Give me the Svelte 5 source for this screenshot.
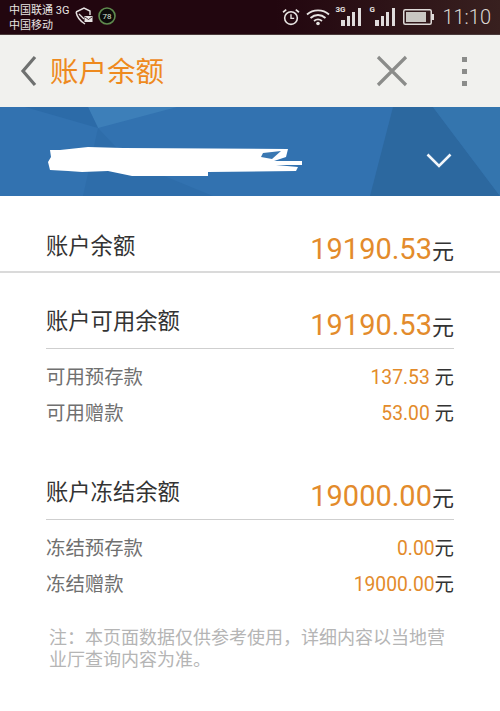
<script>
  const sections = [
    {
      title: '账户可用余额',
      total: '19190.53',
      rows: [
        { label: '可用预存款', value: '137.53', spaced: true },
        { label: '可用赠款', value: '53.00', spaced: true }
      ]
    },
    {
      title: '账户冻结余额',
      total: '19000.00',
      rows: [
        { label: '冻结预存款', value: '0.00', spaced: false },
        { label: '冻结赠款', value: '19000.00', spaced: false }
      ]
    }
  ];

  // full-width colon and comma, as in the original copy
  const note = '注\uFF1A本页面数据仅供参考使用\uFF0C详细内容以当地营业厅查询内容为准\u3002';
</script>

<div class="page">
  <div class="status">
    <div class="carriers">
      <span>中国联通 3G</span>
      <span>中国移动</span>
    </div>
    <svg class="notif" width="50" height="24" viewBox="0 0 50 24">
      <path d="M1 7 L9 3 L15 6 L15 10 M1 7 C2 12 5 16 10 19 M4 9 L9 14" fill="none" stroke="#e6e2e2" stroke-width="1.4" />
      <rect x="9.500" y="11" width="8" height="6" fill="#e6e2e2" />
      <path d="M10 12 L13.500 14.500 L17 12" fill="none" stroke="#22060f" stroke-width="0.8" />
      <circle cx="32" cy="11" r="8" fill="#0c0a0a" stroke="#5f8a4e" stroke-width="1.600" />
      <text x="32" y="14" text-anchor="middle" class="badge">78</text>
    </svg>
    <div class="spacer"></div>
    <svg class="alarm" width="18" height="18" viewBox="0 0 17 17">
      <circle cx="8.500" cy="9.500" r="6" fill="none" stroke="#e8e4e2" stroke-width="1.500" />
      <path d="M8.500 6 V9.800 H11.500" fill="none" stroke="#e8e4e2" stroke-width="1.300" />
      <path d="M1 4 L4 1.500 M16 4 L13 1.500" stroke="#e8e4e2" stroke-width="1.600" />
    </svg>
    <svg class="wifi" width="24" height="18" viewBox="0 0 24 18">
      <path d="M1 6.500 C7 1 17 1 23 6.500 M4.500 10 C9 6 15 6 19.500 10 M8 13 C10.500 11 13.500 11 16 13" fill="none" stroke="#e8e4e2" stroke-width="1.800" />
      <circle cx="12" cy="15.500" r="1.800" fill="#e8e4e2" />
    </svg>
    <div class="signal">
      <span class="net">3G</span>
      <svg width="20" height="18" viewBox="0 0 20 18">
        <path d="M0 12h4v6H0z M6 8h3v10H6z M11 4h3v14h-3z M17 0h3v18h-3z" fill="#e0dcdc" />
      </svg>
    </div>
    <div class="signal second">
      <span class="net">G</span>
      <svg width="20" height="18" viewBox="0 0 20 18">
        <path d="M0 12h4v6H0z M6 8h3v10H6z M11 4h3v14h-3z M17 0h3v18h-3z" fill="#e0dcdc" />
      </svg>
    </div>
    <svg class="battery" width="31" height="16" viewBox="0 0 31 16">
      <rect x="0.750" y="0.750" width="27.500" height="14.500" rx="1.500" fill="none" stroke="#dedad8" stroke-width="1.500" />
      <rect x="3" y="3" width="20" height="10" fill="#c9c6c2" />
      <rect x="29" y="5" width="2" height="6" fill="#dedad8" />
    </svg>
    <span class="clock">11:10</span>
  </div>

  <header class="bar">
    <svg class="back" width="18" height="32" viewBox="0 0 18 32">
      <path d="M15 2 L3 16 L15 30" fill="none" stroke="#6f7170" stroke-width="3.200" />
    </svg>
    <h1>账户余额</h1>
    <div class="spacer"></div>
    <svg class="close" width="32" height="32" viewBox="0 0 32 32">
      <path d="M2 2 L30 30 M30 2 L2 30" stroke="#8b8c8a" stroke-width="3.200" />
    </svg>
    <div class="dots"><i></i><i></i><i></i></div>
  </header>

  <div class="banner">
    <svg class="facets" width="500" height="89" viewBox="0 0 500 89" preserveAspectRatio="none">
      <path d="M88 0 L98 21 L177 0Z" fill="#3d7fb9" />
      <path d="M25 0 L88 0 L98 21Z" fill="#2c6ba8" />
      <path d="M98 21 L130 55 L213 89 L83 89Z" fill="#2e6daa" />
      <path d="M393 0 L433 0 L500 89 L370 89Z" fill="#2c689f" />
      <path d="M433 0 L500 0 L500 89Z" fill="#3475ae" />
    </svg>
    <svg class="scribble" width="256" height="30" viewBox="0 0 256 30">
      <path d="M2 3 L12 3 L40 0 L75 1 L240 2 L238 10 L226 14 L254 14 L254 18 L228 18 L250 20 L248 24 L160 25 L160 29 L84 29 L60 24 L34 25 L20 24 L2 23 L0 15 L3 10Z" fill="#fff" />
      <path d="M215 6 L233 4 L224 12 L213 10Z" fill="#3a78b2" />
    </svg>
    <svg class="chevron" width="26" height="15" viewBox="0 0 26 15">
      <path d="M1.500 1.500 L13 13 L24.500 1.500" fill="none" stroke="#f2f6fa" stroke-width="2.600" />
    </svg>
  </div>

  <div class="summary">
    <span class="title">账户余额</span>
    <span class="amount"><b>19190.53</b>元</span>
  </div>

  {#each sections as section}
    <section>
      <div class="head">
        <span class="title">{section.title}</span>
        <span class="amount"><b>{section.total}</b>元</span>
      </div>
      {#each section.rows as row}
        <div class="row">
          <span>{row.label}</span>
          <span class="small">
            <b>{row.value}</b>{#if row.spaced}&nbsp;{/if}<em>元</em>
          </span>
        </div>
      {/each}
    </section>
  {/each}

  <p class="note">{note}</p>
</div>

<style>
  :global(body) {
    margin: 0;
    background: #fff;
  }

  .page {
    width: 500px;
    height: 711px;
    overflow: hidden;
    font-family: Roboto, "Noto Sans CJK SC", sans-serif;
    color: #333;
  }

  .spacer {
    flex: 1;
  }

  .status {
    height: 34px;
    display: flex;
    align-items: center;
    background: linear-gradient(90deg, #22060f 0%, #22060f 55%, #38201f 100%);
    border-bottom: 1px solid #4a3a3a;
    color: #e8e4e2;
    padding: 0 9px;
  }

  .carriers {
    display: flex;
    flex-direction: column;
    font-size: 11px;
    line-height: 15px;
    margin-top: 1px;
    width: 66px;
    white-space: nowrap;
  }

  .badge {
    font-size: 8px;
    fill: #dfe6da;
  }

  .alarm {
    margin-right: 6px;
  }

  .signal {
    position: relative;
    display: flex;
    margin-left: 11px;
  }

  .signal.second {
    margin-left: 14px;
  }

  .net {
    position: absolute;
    top: -3px;
    left: -6px;
    font-size: 8px;
    line-height: 9px;
    font-weight: 700;
  }

  .battery {
    margin-left: 8px;
  }

  .clock {
    font-size: 20px;
    margin-left: 8px;
    color: #dcd8d4;
    font-weight: 300;
  }

  .bar {
    height: 72px;
    box-sizing: border-box;
    display: flex;
    align-items: center;
    background: #f1f1ee;
    padding-left: 20px;
  }

  .back {
    margin-right: 12px;
  }

  h1 {
    margin: -4px 0 0;
    font-size: 28.500px;
    font-weight: 400;
    color: #ee8a1e;
  }

  .close {
    margin-right: 54px;
  }

  .dots {
    display: flex;
    flex-direction: column;
    gap: 7px;
    margin-right: 33px;
  }

  .dots i {
    display: block;
    width: 5px;
    height: 5px;
    background: #8b8c8a;
  }

  .banner {
    position: relative;
    height: 89px;
    background: #3272b0;
    display: flex;
    align-items: center;
    justify-content: space-between;
    padding: 0 48px;
    box-sizing: border-box;
  }

  .facets {
    position: absolute;
    inset: 0;
  }

  .scribble {
    position: relative;
    margin-top: 21px;
  }

  .chevron {
    position: relative;
    margin-right: 0;
    margin-top: 18px;
  }

  .summary {
    height: 77px;
    box-sizing: border-box;
    padding: 28px 46px 0;
    display: flex;
    justify-content: space-between;
    align-items: center;
    border-bottom: 2px solid #dadada;
  }

  .title {
    font-size: 22.300px;
    margin-top: -7px;
    color: #333;
  }

  .amount {
    font-size: 22px;
    margin-top: 3px;
    color: #333;
  }

  .amount b {
    font-size: 29px;
    font-weight: 400;
    color: #e38b2b;
  }

  section {
    padding: 0 46px;
    margin-bottom: 40px;
  }

  section:first-of-type {
    margin-top: 25px;
  }

  section:last-of-type {
    margin-bottom: 27px;
  }

  .head {
    height: 50px;
    display: flex;
    justify-content: space-between;
    align-items: center;
    border-bottom: 1px solid #cfcfcf;
    margin-bottom: 8px;
  }

  .head .title {
    margin-top: -9px;
  }

  .row {
    height: 36px;
    display: flex;
    justify-content: space-between;
    align-items: center;
    font-size: 19.400px;
    color: #707070;
  }

  .small b {
    font-size: 19.300px;
    font-weight: 400;
    color: #e38b2b;
  }

  .small em {
    font-style: normal;
    color: #333;
    font-size: 19.400px;
  }

  .note {
    margin: 0;
    padding: 0 50px 0 49px;
    font-size: 18px;
    line-height: 22px;
    color: #b5b5b5;
  }
</style>
